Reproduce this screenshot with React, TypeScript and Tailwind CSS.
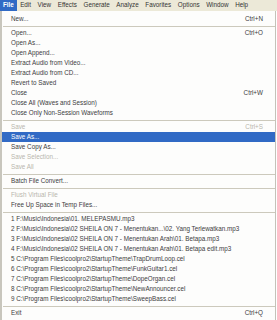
type Item = { label: string; shortcut?: string; disabled?: boolean; active?: boolean } | "sep";

const menus = ["File", "Edit", "View", "Effects", "Generate", "Analyze", "Favorites", "Options", "Window", "Help"];

const items: Item[] = [
    { label: "New...", shortcut: "Ctrl+N" },
    "sep",
    { label: "Open...", shortcut: "Ctrl+O" },
    { label: "Open As..." },
    { label: "Open Append..." },
    { label: "Extract Audio from Video..." },
    { label: "Extract Audio from CD..." },
    { label: "Revert to Saved" },
    { label: "Close", shortcut: "Ctrl+W" },
    { label: "Close All (Waves and Session)" },
    { label: "Close Only Non-Session Waveforms" },
    "sep",
    { label: "Save", shortcut: "Ctrl+S", disabled: true },
    { label: "Save As...", active: true },
    { label: "Save Copy As..." },
    { label: "Save Selection...", disabled: true },
    { label: "Save All", disabled: true },
    "sep",
    { label: "Batch File Convert..." },
    "sep",
    { label: "Flush Virtual File", disabled: true },
    { label: "Free Up Space in Temp Files..." },
    "sep",
    { label: "1 F:\\Music\\Indonesia\\01. MELEPASMU.mp3" },
    { label: "2 F:\\Music\\Indonesia\\02 SHEILA ON 7 - Menentukan...\\02. Yang Terlewatkan.mp3" },
    { label: "3 F:\\Music\\Indonesia\\02 SHEILA ON 7 - Menentukan Arah\\01. Betapa.mp3" },
    { label: "4 F:\\Music\\Indonesia\\02 SHEILA ON 7 - Menentukan Arah\\01. Betapa edit.mp3" },
    { label: "5 C:\\Program Files\\coolpro2\\StartupTheme\\TrapDrumLoop.cel" },
    { label: "6 C:\\Program Files\\coolpro2\\StartupTheme\\FunkGuitar1.cel" },
    { label: "7 C:\\Program Files\\coolpro2\\StartupTheme\\DopeOrgan.cel" },
    { label: "8 C:\\Program Files\\coolpro2\\StartupTheme\\NewAnnouncer.cel" },
    { label: "9 C:\\Program Files\\coolpro2\\StartupTheme\\SweepBass.cel" },
    "sep",
    { label: "Exit", shortcut: "Ctrl+Q" },
];

export default function App() {
    return (
        <div className="w-[277px] h-[320px] overflow-hidden bg-white text-[6.3px] leading-none text-[#3c3c3c] font-['Liberation_Sans',Arial,sans-serif]">
            {/* Menu bar */}
            <div className="h-[11px] flex items-stretch bg-[#ece9d8] text-[#333]">
                {menus.map((m, i) => (
                    <div
                        key={m}
                        className={
                            i === 0
                                ? "flex items-center px-[3px] bg-[#316ac5] text-white font-bold"
                                : "flex items-center px-[3.3px]"
                        }
                    >
                        {m}
                    </div>
                ))}
            </div>

            {/* File dropdown */}
            <div className="w-[276px] h-[309px] flex flex-col pt-[3px] bg-[#fdfdfc] border-l-[2px] border-l-[#c8c6bd] border-r border-r-[#c4c2b9]">
                {items.map((it, i) =>
                    it === "sep" ? (
                        <div key={i} className="h-[4px] flex items-center pl-[1px]">
                            <div className="h-px w-full bg-[#ccc9bc]" />
                        </div>
                    ) : (
                        <div
                            key={i}
                            className={
                                "h-[10px] shrink-0 flex items-center justify-between pl-[9px] pr-[12px] whitespace-nowrap " +
                                (it.active ? "bg-[#316ac5] text-white" : it.disabled ? "text-[#b8b6ad]" : "")
                            }
                        >
                            <span>{it.label}</span>
                            {it.shortcut && <span>{it.shortcut}</span>}
                        </div>
                    )
                )}
            </div>
        </div>
    );
}
